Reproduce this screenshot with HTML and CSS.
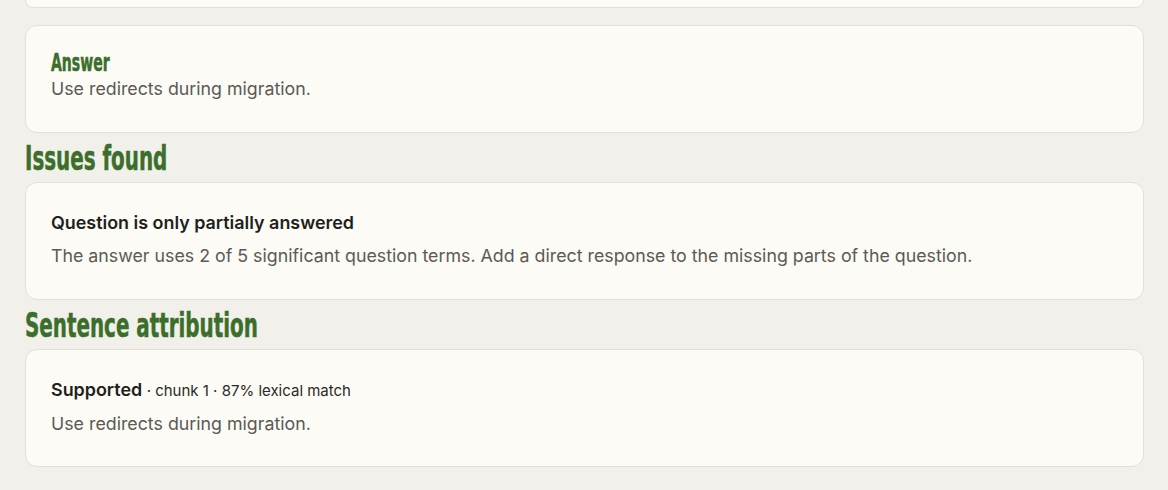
FILE: index.html
```html
<!DOCTYPE html>
<html lang="en">
<head>
<meta charset="utf-8">
<title>Review</title>
<link rel="stylesheet" href="styles.css">
</head>
<body>
<main class="page">
  <div class="card card-cut"></div>

  <section class="card answer-card">
    <div class="label"><span class="narrow">Answer</span></div>
    <p class="body-text">Use redirects during migration.</p>
  </section>

  <h2 class="section-title"><span class="narrow">Issues found</span></h2>
  <section class="card">
    <div class="item-title">Question is only partially answered</div>
    <p class="body-text">The answer uses 2 of 5 significant question terms. Add a direct response to the missing parts of the question.</p>
  </section>

  <h2 class="section-title"><span class="narrow">Sentence attribution</span></h2>
  <section class="card last-card">
    <div class="item-title">Supported <span class="meta">· chunk 1 · 87% lexical match</span></div>
    <p class="body-text">Use redirects during migration.</p>
  </section>
</main>
</body>
</html>
```

FILE: styles.css
```css
* { box-sizing: border-box; }

html, body {
  margin: 0;
  padding: 0;
  background: #f2f0ea;
}

body {
  font-family: Inter, "Noto Sans", sans-serif;
  color: #1f1f1c;
}

.page {
  display: flex;
  flex-direction: column;
  padding: 0 24px 24px 25px;
}

.card {
  background: #fcfbf6;
  border: 1px solid #e3e0d8;
  border-radius: 12px;
  padding: 28px 25px 30px 25px;
}

.card-cut {
  height: 8px;
  padding: 0;
  border-top: none;
  border-radius: 0 0 12px 12px;
  margin-bottom: 17px;
}

.answer-card {
  padding-top: 24px;
  padding-bottom: 30px;
}

.last-card {
  padding-bottom: 29px;
}

.narrow {
  display: inline-block;
  transform: scaleX(0.65);
  transform-origin: left center;
  white-space: nowrap;
  -webkit-text-stroke: 0.5px currentColor;
}

.label {
  font-family: "DejaVu Sans Condensed", "DejaVu Sans", sans-serif;
  font-weight: 700;
  font-size: 24px;
  line-height: 26px;
  color: #3a6e2a;
}

.section-title {
  margin: 8px 0 7px;
  font-family: "DejaVu Sans Condensed", "DejaVu Sans", sans-serif;
  font-weight: 700;
  font-size: 34px;
  line-height: 34px;
  color: #3a6e2a;
}

.item-title {
  font-size: 17.9px;
  line-height: 24px;
  font-weight: 600;
  color: #1f1f1c;
}

.meta {
  font-size: 15px;
  font-weight: 400;
  color: #2a2a26;
}

.body-text {
  margin: 8px 0 0;
  font-size: 17.8px;
  line-height: 26px;
  color: #5b5a55;
}

.answer-card .body-text {
  margin-top: 0;
}
```
